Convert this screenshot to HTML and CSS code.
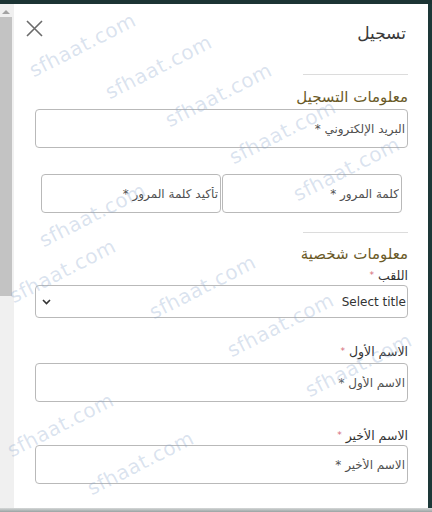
FILE: index.html
```html
<!DOCTYPE html>
<html lang="ar">
<head>
<meta charset="utf-8">
<title>تسجيل</title>
<link rel="stylesheet" href="styles.css">
</head>
<body>
<div class="screen">
  <div class="topbar"></div>
  <div class="main">
    <div class="scrollbar">
      <div class="arrow"></div>
      <div class="thumb"></div>
    </div>
    <div class="modal" dir="rtl">
      <div class="header">
        <h1 class="title">تسجيل</h1>
        <button class="close" aria-label="close">
          <svg width="17" height="17" viewBox="0 0 17 17"><path d="M1 1 L16 16 M16 1 L1 16" stroke="#6b6b6b" stroke-width="1.6" fill="none"/></svg>
        </button>
      </div>
      <div class="rule first"></div>
      <h2 class="section">معلومات التسجيل</h2>
      <input class="field email" type="text" placeholder="البريد الإلكتروني *">
      <div class="pair">
        <input class="field half" type="password" placeholder="كلمة المرور *">
        <input class="field half" type="password" placeholder="تأكيد كلمة المرور *">
      </div>
      <div class="rule second"></div>
      <h2 class="section personal">معلومات شخصية</h2>
      <div class="label l1">اللقب <span class="req">*</span></div>
      <div class="select">
        <span>Select title</span>
        <svg width="9" height="6" viewBox="0 0 9 6"><path d="M1 1 L4.5 4.5 L8 1" stroke="#333" stroke-width="1.6" fill="none"/></svg>
      </div>
      <div class="label l2">الاسم الأول <span class="req">*</span></div>
      <input class="field name1" type="text" placeholder="الاسم الأول *">
      <div class="label l3">الاسم الأخير <span class="req">*</span></div>
      <input class="field name2" type="text" placeholder="الاسم الأخير *">
    </div>
    <div class="edge"></div>
  </div>
  <div class="bottombar"></div>
  <div class="watermarks" aria-hidden="true">
    <span class="wm w1">sfhaat.com</span>
    <span class="wm w2">sfhaat.com</span>
    <span class="wm w3">sfhaat.com</span>
    <span class="wm w4">sfhaat.com</span>
    <span class="wm w5">sfhaat.com</span>
    <span class="wm w6">sfhaat.com</span>
    <span class="wm w7">sfhaat.com</span>
    <span class="wm w8">sfhaat.com</span>
    <span class="wm w9">sfhaat.com</span>
    <span class="wm w10">sfhaat.com</span>
    <span class="wm w11">sfhaat.com</span>
    <span class="wm w12">sfhaat.com</span>
  </div>
</div>
</body>
</html>
```

FILE: styles.css
```css
* { box-sizing: border-box; }
html, body { margin: 0; padding: 0; }
body {
  width: 432px;
  height: 512px;
  overflow: hidden;
  background: #1f3535;
  font-family: "DejaVu Sans", "Noto Sans", sans-serif;
}
.screen {
  position: relative;
  width: 432px;
  height: 512px;
  display: flex;
  flex-direction: column;
}
.topbar { height: 4px; background: #1c3434; flex: none; }
.main { display: flex; height: 504px; flex: none; }
.bottombar { flex: 1; background: linear-gradient(#d6d8d8, #9aa2a2); }

.scrollbar {
  width: 14px;
  flex: none;
  background: #f0f0f0;
  display: flex;
  flex-direction: column;
}
.arrow {
  margin: 6px 0 0 2px;
  width: 0; height: 0;
  border-left: 4px solid transparent;
  border-right: 4px solid transparent;
  border-bottom: 4px solid #a3a3a3;
}
.thumb {
  margin-top: 3px;
  width: 12px;
  height: 279px;
  background: #c3c3c3;
}

.modal {
  width: 414px;
  flex: none;
  background: #fff;
  padding: 0 20px 0 21px;
  display: flex;
  flex-direction: column;
  color: #333;
}
.edge { flex: 1; background: #1d3838; }

.header {
  display: flex;
  justify-content: space-between;
  align-items: flex-start;
  padding-top: 19px;
}
.title {
  margin: 0;
  font-size: 17px;
  line-height: 20px;
  font-weight: normal;
  color: #3a3a3a;
  padding-right: 2px;
}
.close {
  border: 0;
  background: none;
  padding: 0;
  margin: -3px 0 0 -9px;
  width: 17px;
  height: 17px;
  display: flex;
}

.rule { width: 105px; height: 1px; background: #dcdcdc; }
.rule.first { margin-top: 31px; }
.rule.second { margin-top: 19px; }

.section {
  margin: 12px 0 0;
  font-size: 15px;
  line-height: 20px;
  font-weight: normal;
  color: #6a5a28;
}
.section.personal { margin-top: 11px; }

.field {
  display: block;
  width: 100%;
  height: 39px;
  border: 1px solid #b9b9b9;
  border-radius: 4px;
  padding: 0 2px;
  font-family: inherit;
  font-size: 12px;
  color: #444;
  background: #fff;
  direction: rtl;
}
.field::placeholder { color: #505050; }
.email { margin-top: 2px; }

.pair {
  display: flex;
  gap: 1px;
  margin: 26px 6px 0;
}
.half { flex: 1; width: auto; min-width: 0; }

.label {
  font-size: 12.5px;
  line-height: 17px;
  height: 17px;
  color: #333;
}
.req { color: #d46a78; font-size: 9px; line-height: 9px; vertical-align: 2px; }
.l1 { margin-top: 3px; }
.l2 { margin-top: 25px; }
.l3 { margin-top: 25px; }

.select {
  margin-top: 1px;
  height: 33px;
  border: 1px solid #b9b9b9;
  border-radius: 4px;
  display: flex;
  align-items: center;
  justify-content: space-between;
  padding: 0 1px 0 6px;
  font-size: 12px;
  color: #333;
}
.name1 { margin-top: 3px; }
.name2 { margin-top: 1px; }

.watermarks {
  position: absolute;
  inset: 0;
  overflow: hidden;
  pointer-events: none;
}
.wm {
  position: absolute;
  font-family: "DejaVu Sans", sans-serif;
  font-size: 20px;
  font-weight: normal;
  color: rgba(140, 168, 205, 0.33);
  transform: rotate(-27deg);
  transform-origin: left bottom;
  white-space: nowrap;
  letter-spacing: 0.5px;
}
.w1 { left: 36px; top: 58px; }
.w2 { left: 112px; top: 80px; }
.w3 { left: 172px; top: 108px; }
.w4 { left: 236px; top: 145px; }
.w5 { left: 300px; top: 182px; }
.w6 { left: 46px; top: 228px; }
.w7 { left: 16px; top: 284px; }
.w8 { left: 156px; top: 300px; }
.w9 { left: 234px; top: 338px; }
.w10 { left: 312px; top: 378px; }
.w11 { left: 14px; top: 438px; }
.w12 { left: 94px; top: 476px; }
```
